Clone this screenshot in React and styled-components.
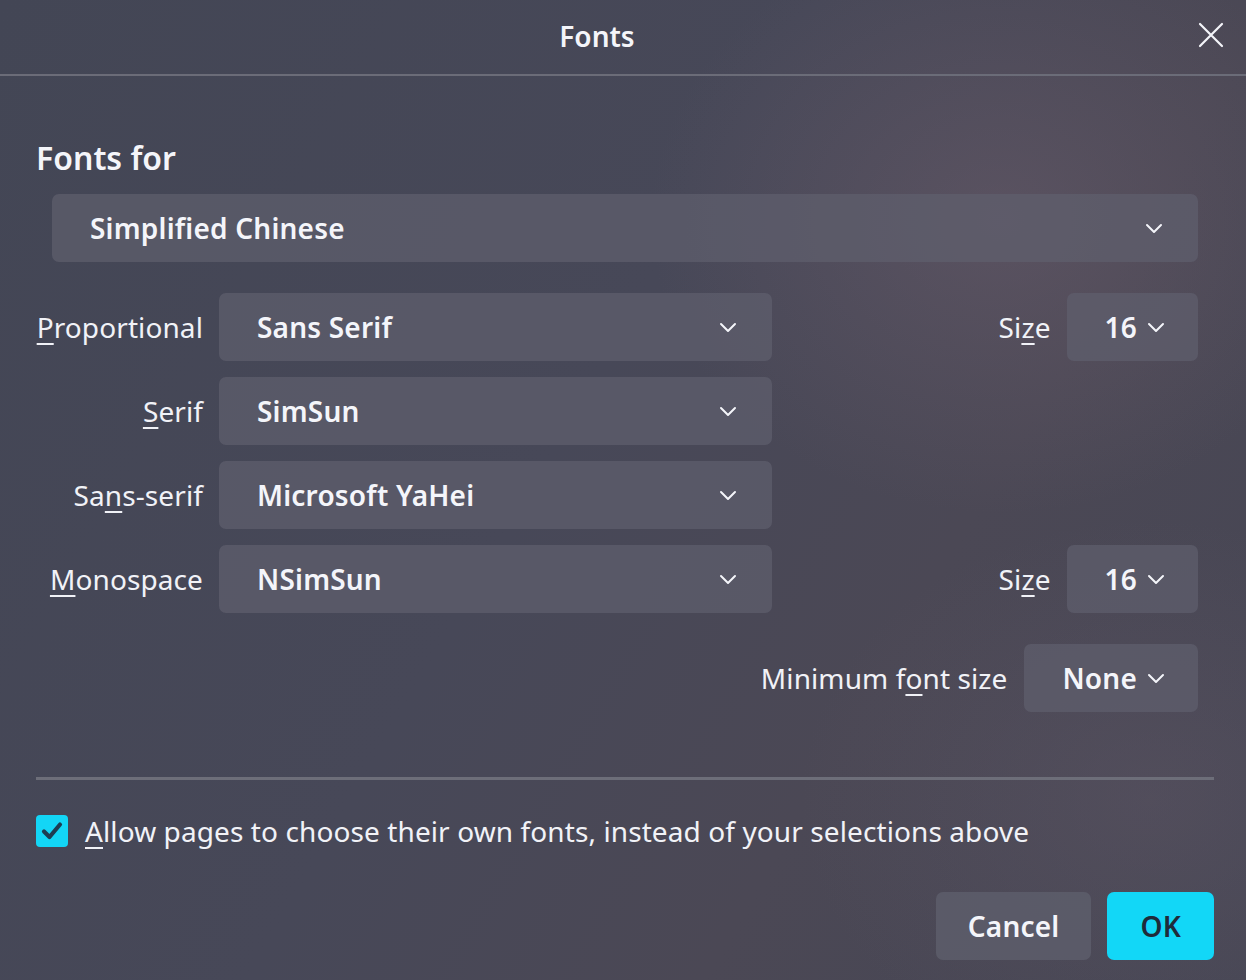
import React from "react";
import styled, { createGlobalStyle } from "styled-components";

const Global = createGlobalStyle`
  html, body { margin: 0; padding: 0; }
  body {
    width: 1246px; height: 980px; overflow: hidden;
    font-family: "Noto Sans", "Open Sans", sans-serif;
    background: #444655;
  }
`;

const Dialog = styled.div`
  width: 1246px; height: 980px;
  box-sizing: border-box;
  color: #f4f5fa;
  background:
    radial-gradient(ellipse 500px 420px at 1000px 220px, rgba(110, 95, 110, 0.45), transparent 70%),
    radial-gradient(ellipse 500px 400px at 1150px 800px, rgba(100, 90, 105, 0.35), transparent 70%),
    linear-gradient(120deg, #434655 0%, #474858 45%, #4b4855 70%, #464654 100%);
  display: flex; flex-direction: column;
`;

const Header = styled.header`
  height: 74px; flex: none;
  border-bottom: 2px solid #6b6c78;
  display: grid;
  grid-template-columns: 1fr auto 1fr;
  align-items: center;
`;

const Title = styled.h1`
  grid-column: 2;
  margin: 0 52px 0 0; padding-bottom: 2px;
  font-size: 28px; font-weight: 600;
  color: #f4f5fa;
`;

const Close = styled.button`
  grid-column: 3; justify-self: end;
  margin-right: 20px; margin-bottom: 4px;
  width: 30px; height: 30px; padding: 0;
  border: none; background: none; color: #f4f5fa;
  display: flex; align-items: center; justify-content: center;
`;

const Body = styled.div`
  flex: 1;
  padding: 0 32px 0 36px;
  display: flex; flex-direction: column;
`;

const SectionTitle = styled.h2`
  margin: 62px 0 0 0;
  font-size: 32px; font-weight: 600;
  line-height: 40px;
  color: #f4f5fa;
`;

const Select = styled.div`
  box-sizing: border-box;
  height: 68px;
  border-radius: 7px;
  background: rgba(95, 96, 110, 0.7);
  display: flex; align-items: center;
  justify-content: ${(p) => (p.$compact ? "flex-start" : "space-between")};
  gap: 10px;
  padding: ${(p) => (p.$compact ? "0 33px 0 38px" : "0 35px 0 38px")};
  font-size: 28px; font-weight: 600; letter-spacing: 0.2px;
  color: #f4f5fa;
  flex: none;
`;

const LangSelect = styled(Select)`
  margin: 16px 16px 0 16px;
`;

const Grid = styled.div`
  margin-top: 31px;
  display: grid;
  grid-template-columns: 167px 553px 1fr auto;
  column-gap: 16px;
  row-gap: 16px;
  align-items: center;
  margin-right: 16px;
`;

const Label = styled.label`
  font-size: 28px; font-weight: 400; letter-spacing: 0.1px;
  color: #f1f2f7;
  text-align: right;
  white-space: nowrap;
  u { text-decoration-thickness: 2px; text-underline-offset: 5px; }
`;

const Empty = styled.span``;

const MinRow = styled.div`
  margin-top: 31px;
  margin-right: 16px;
  display: flex; justify-content: flex-end; align-items: center; gap: 17px;
`;

const Separator = styled.hr`
  margin: 65px 0 0 0;
  border: none; height: 3px;
  background: #6d6e79;
`;

const CheckRow = styled.div`
  margin-top: 35px;
  display: flex; align-items: center; gap: 17px;
  height: 32px;
`;

const Box = styled.span`
  width: 32px; height: 32px; border-radius: 4px;
  background: #13d6f6;
  display: flex; align-items: center; justify-content: center;
  flex: none;
`;

const CheckText = styled.span`
  font-size: 28px; letter-spacing: 0.1px; color: #f1f2f7;
  line-height: 32px;
  u { text-decoration-thickness: 2px; text-underline-offset: 5px; }
`;

const Buttons = styled.div`
  margin-top: 45px;
  display: flex; justify-content: flex-end; gap: 16px;
`;

const Button = styled.button`
  height: 68px; border: none; border-radius: 7px;
  font-family: inherit;
  font-size: 28px; font-weight: 600; letter-spacing: 0.2px;
  padding: 0 ${(p) => (p.$primary ? "33px" : "32px")};
  color: ${(p) => (p.$primary ? "#1f2a3a" : "#f4f5fa")};
  background: ${(p) => (p.$primary ? "#12d7f7" : "rgba(95, 96, 110, 0.75)")};
`;

const Chevron = () => (
  <svg width="18" height="11" viewBox="0 0 18 11" fill="none">
    <path d="M2 2 L9 9 L16 2" stroke="#f4f5fa" strokeWidth="2" strokeLinecap="round" strokeLinejoin="round" />
  </svg>
);

const Dropdown = ({ value, compact }) => (
  <Select $compact={compact}>
    <span>{value}</span>
    <Chevron />
  </Select>
);

export default function App() {
  return (
    <>
      <Global />
      <Dialog>
        <Header>
          <Title>Fonts</Title>
          <Close aria-label="close">
            <svg width="26" height="26" viewBox="0 0 26 26">
              <path d="M2 2 L24 24 M24 2 L2 24" stroke="#f4f5fa" strokeWidth="2.2" strokeLinecap="round" />
            </svg>
          </Close>
        </Header>
        <Body>
          <SectionTitle>Fonts for</SectionTitle>
          <LangSelect>
            <span>Simplified Chinese</span>
            <Chevron />
          </LangSelect>
          <Grid>
            <Label><u>P</u>roportional</Label>
            <Dropdown value="Sans Serif" />
            <Label>Si<u>z</u>e</Label>
            <Dropdown value="16" compact />

            <Label><u>S</u>erif</Label>
            <Dropdown value="SimSun" />
            <Empty />
            <Empty />

            <Label>Sa<u>n</u>s-serif</Label>
            <Dropdown value="Microsoft YaHei" />
            <Empty />
            <Empty />

            <Label><u>M</u>onospace</Label>
            <Dropdown value="NSimSun" />
            <Label>Si<u>z</u>e</Label>
            <Dropdown value="16" compact />
          </Grid>
          <MinRow>
            <Label>Minimum f<u>o</u>nt size</Label>
            <Dropdown value="None" compact />
          </MinRow>
          <Separator />
          <CheckRow>
            <Box>
              <svg width="24" height="22" viewBox="0 0 24 22">
                <path d="M4 11.5 L9.5 17 L20 4.5" stroke="#1d3d52" strokeWidth="4.2" fill="none" strokeLinecap="round" strokeLinejoin="round" />
              </svg>
            </Box>
            <CheckText><u>A</u>llow pages to choose their own fonts, instead of your selections above</CheckText>
          </CheckRow>
          <Buttons>
            <Button>Cancel</Button>
            <Button $primary>OK</Button>
          </Buttons>
        </Body>
      </Dialog>
    </>
  );
}
